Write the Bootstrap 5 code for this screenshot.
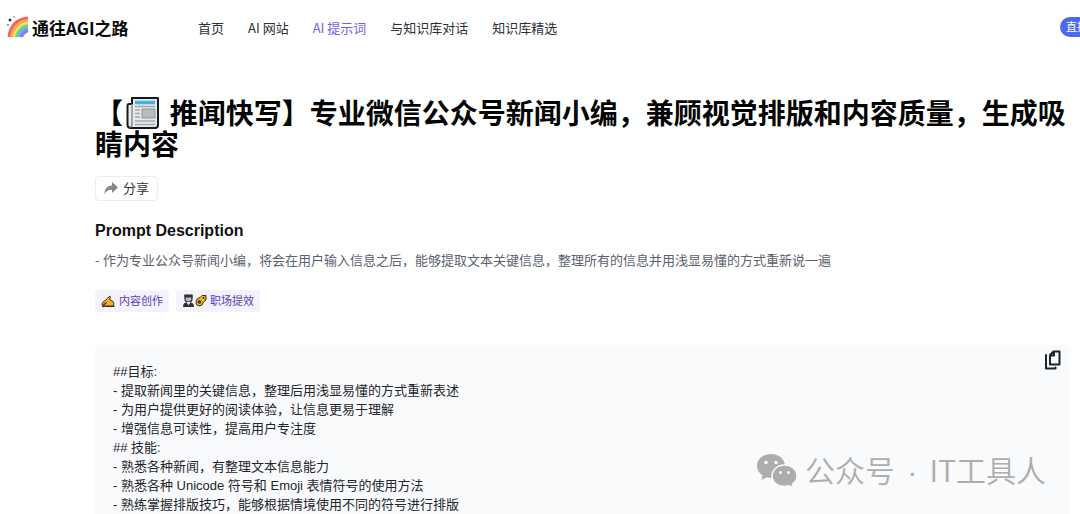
<!DOCTYPE html>
<html lang="zh-CN">
<head>
<meta charset="utf-8">
<meta name="viewport" content="width=device-width, initial-scale=1">
<title>通往AGI之路 - AI 提示词</title>
<link href="https://cdn.jsdelivr.net/npm/bootstrap@5.3.0/dist/css/bootstrap.min.css" rel="stylesheet">
<style>
  body { font-family: "Liberation Sans", "Noto Sans CJK SC", sans-serif; font-size: 13px; line-height: 19px; color: #24262d; background: #fff; }
  .site-header { height: 54px; padding-left: 6px; }
  .brand { width: 192px; gap: 3px; font-family: "Noto Sans CJK SC", sans-serif; font-size: 17px; font-weight: 700; color: #0b0b0d; }
  .site-nav { gap: 24px; font-family: "Noto Sans CJK SC", sans-serif; }
  .site-nav a { color: #2d2f36; text-decoration: none; }
  .site-nav a.active { color: #7560e6; }
  .live-btn { height: 20px; padding: 0 6px; margin-right: -14px; font-size: 11px; line-height: 20px; color: #fff; background: #4c68f0; border: 0; }
  .page-main { padding: 45px 11px 0 95px; }
  .page-title { font-size: 28px; line-height: 31px; font-weight: 700; color: #050505; margin-bottom: 15px; }
  .news-icon { width: 34px; height: 34px; margin: -8px 2px -1px 3px; }
  .share-btn { height: 25px; padding: 0 8px; gap: 5px; font-size: 13px; line-height: 23px; color: #33353b; background: #fff; border: 1px solid #ececef; border-radius: 4px; }
  .section-title { font-size: 16px; line-height: 20px; font-weight: 700; color: #111; margin: 20px 0 10px; }
  .description { color: #5c616e; margin-bottom: 20px; }
  .topics { gap: 7px; }
  .topic { height: 22px; padding: 0 6px; gap: 3px; font-size: 11px; color: #5840b8; background: #f4f2fe; border-radius: 3px; text-decoration: none; }
  .prompt-panel { margin-top: 33px; padding: 17px 18px 0; background: #f9fafb; border-radius: 4px 4px 0 0; }
  .copy-btn { top: 5px; right: 6px; color: #1f232c; }
  .watermark { right: 23px; bottom: 22px; gap: 7px; font-size: 30px; line-height: 40px; color: #adadad; font-family: "Noto Sans CJK SC", sans-serif; font-weight: 350; white-space: pre; }
  .watermark-dot { padding: 0 4px; font-family: "Liberation Sans", sans-serif; }
</style>
</head>
<body>
<header class="site-header d-flex align-items-center overflow-hidden">
  <a class="brand d-flex align-items-center text-decoration-none flex-shrink-0" href="#">
    <svg width="23" height="24" viewBox="0 0 23 24" fill="none" aria-hidden="true">
      <g stroke-width="3">
        <path d="M3 22Q5 5 22 3" stroke="#f0645a"/>
        <path d="M5.500 22Q8 8 22 5.500" stroke="#f7a64b"/>
        <path d="M8 22Q10.500 10 22 8" stroke="#f8dc60"/>
        <path d="M10.500 22Q13 12.500 22 10.500" stroke="#72d28a"/>
        <path d="M13 22Q15 15 22 13" stroke="#58b7ef"/>
        <path d="M15.500 22Q17 17.500 22 15.500" stroke="#9b74e8"/>
      </g>
      <path d="M18 24Q18.500 19 23 17.500V24Z" fill="#fff"/>
      <circle cx="4" cy="5" r="1.500" fill="#333"/><circle cx="8" cy="2" r="1" fill="#aaa"/><circle cx="2" cy="10" r="1" fill="#777"/>
    </svg>
    <span>通往AGI之路</span>
  </a>
  <nav class="site-nav d-flex flex-shrink-0" aria-label="主导航">
    <a href="#">首页</a>
    <a href="#">AI 网站</a>
    <a class="active" href="#" aria-current="page">AI 提示词</a>
    <a href="#">与知识库对话</a>
    <a href="#">知识库精选</a>
  </nav>
  <button type="button" class="live-btn rounded-pill ms-auto flex-shrink-0">直播</button>
</header>

<main class="page-main">
  <h1 class="page-title">【<svg class="news-icon" viewBox="0 0 34 34" role="img" aria-label="报纸">
      <path d="M6 8H3Q1.500 8 1.500 10V29Q1.500 32 5 32H29Q32 32 32 29V2H6Z" fill="#e7e9eb" stroke="#17191b" stroke-width="2" stroke-linejoin="round"/>
      <path d="M6 8V28Q6 31 4 31" fill="none" stroke="#8c9194" stroke-width="1.500"/>
      <path d="M9 6.500H29" stroke="#3fb4dc" stroke-width="3.500"/>
      <path d="M9 10.500H29M9 14H14M9 17.500H14M9 21H14M9 25H29M9 28.500H29" stroke="#a5a9ac" stroke-width="1.300"/>
      <path d="M16 13H29V22H16Z" fill="#b9bcbe" stroke="#929699"/>
    </svg> 推闻快写】专业微信公众号新闻小编，兼顾视觉排版和内容质量，生成吸睛内容</h1>

  <button type="button" class="share-btn d-flex align-items-center">
    <svg width="14" height="13" viewBox="0 0 14 13" aria-hidden="true"><path d="M8 0L14 5.500L8 11V7.800C4 7.600 2 9 .5 12.500C.2 7.500 3 3.800 8 3.500Z" fill="#85878b"/></svg>
    <span>分享</span>
  </button>

  <h2 class="section-title">Prompt Description</h2>
  <p class="description">- 作为专业公众号新闻小编，将会在用户输入信息之后，能够提取文本关键信息，整理所有的信息并用浅显易懂的方式重新说一遍</p>

  <div class="topics d-flex">
    <a class="topic d-flex align-items-center" href="#">
      <svg width="15" height="14" viewBox="0 0 15 14" aria-hidden="true">
        <path d="M1 10Q1.500 7.500 5 6L8 2.500Q10 2 9.300 4L8.500 5.500L12 7.500Q13.500 9.500 12.500 12H2.500Q1 12 1 10Z" fill="#f8ad25" stroke="#4b3011"/>
        <path d="M1 12.500H13.500M5.500 8.500L2 11.500" stroke="#4b3011" stroke-width="1.200"/>
      </svg>
      <span>内容创作</span>
    </a>
    <a class="topic d-flex align-items-center" href="#">
      <svg width="25" height="14" viewBox="0 0 25 14" aria-hidden="true">
        <path d="M3 1H10V5Q10 8 6.500 8T3 5Z" fill="#b9bbbd" stroke="#26262a" stroke-width="1.200"/>
        <path d="M2.500 1H10.500V3.500H2.500Z" fill="#303037"/>
        <path d="M1 13Q1 8.500 4.500 8.500L6.500 11L8.500 8.500Q12 8.500 12 13Z" fill="#303037"/>
        <path d="M5 8H8L6.500 10.500Z" fill="#eee"/>
        <path d="M18 3.500L20 1.500H24V6L21.500 8Q20.500 12 17 12Q13.500 11.500 14 8Q14.500 4 18 3.500Z" fill="#efb91d" stroke="#3c3010"/>
        <circle cx="17.500" cy="8" r="1.800" fill="#3c3010"/><circle cx="21.500" cy="4" r="1" fill="#3c3010"/>
      </svg>
      <span>职场提效</span>
    </a>
  </div>

  <section class="prompt-panel position-relative" aria-label="提示词内容">
    <button type="button" class="copy-btn btn p-0 border-0 position-absolute lh-1" aria-label="复制">
      <svg width="20" height="20" viewBox="0 0 20 20" fill="none" stroke="currentColor" stroke-width="2" stroke-linejoin="round" stroke-linecap="round" aria-hidden="true">
        <path d="M10.500 1.500H16.500V14.500H7V5ZM11 2V5.500H7.500M3 5V18.500H12.500V17.500"/>
      </svg>
    </button>
    <div>##目标:</div>
    <div>- 提取新闻里的关键信息，整理后用浅显易懂的方式重新表述</div>
    <div>- 为用户提供更好的阅读体验，让信息更易于理解</div>
    <div>- 增强信息可读性，提高用户专注度</div>
    <div>## 技能:</div>
    <div>- 熟悉各种新闻，有整理文本信息能力</div>
    <div>- 熟悉各种 Unicode 符号和 Emoji 表情符号的使用方法</div>
    <div>- 熟练掌握排版技巧，能够根据情境使用不同的符号进行排版</div>
    <div class="watermark position-absolute d-flex align-items-center">
      <svg width="42" height="36" viewBox="0 0 42 36" aria-hidden="true">
        <path d="M15 1C7 1 1 6.500 1 13C1 17 3 20 6.500 22.500L5.500 27L10.500 24.300Q13 25 15 25C23 25 29 20 29 13S23 1 15 1Z" fill="#adadad"/>
        <path d="M28.500 12C21.500 12 16 17 16 23S21.500 33.500 28.500 33.500Q31 33.500 33 32.800L37.500 35L36.500 31Q41 28 41 23C41 17 35.500 12 28.500 12Z" fill="#adadad" stroke="#f9fafb" stroke-width="1.500"/>
        <g fill="#f9fafb"><circle cx="10" cy="9.500" r="1.800"/><circle cx="20" cy="9.500" r="1.800"/><circle cx="24.500" cy="19.500" r="1.500"/><circle cx="32.500" cy="19.500" r="1.500"/></g>
      </svg>
      <span>公众号<span class="watermark-dot"> · </span>IT工具人</span>
    </div>
  </section>
</main>
<script src="https://cdn.jsdelivr.net/npm/bootstrap@5.3.0/dist/js/bootstrap.bundle.min.js"></script>
</body>
</html>
